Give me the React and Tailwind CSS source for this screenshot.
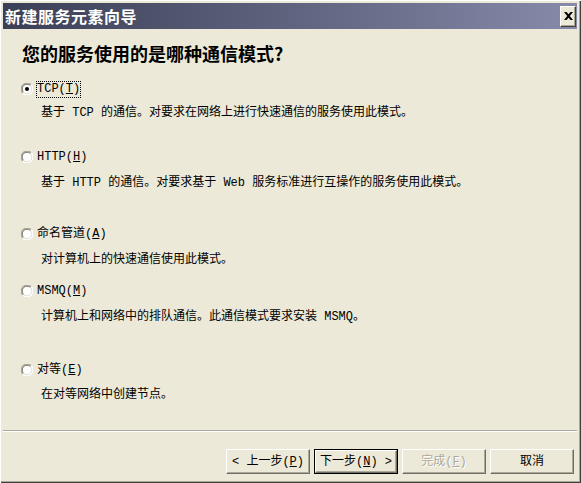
import React, { useState } from 'react';

const FONT = "font-['Liberation_Mono','Noto_Sans_CJK_SC',monospace]";

const options = [
    { id: 'tcp', name: 'TCP', key: 'T', desc: '基于 TCP 的通信。对要求在网络上进行快速通信的服务使用此模式。', rowMt: 'mt-[15px]', descMt: 'mt-[7px]' },
    { id: 'http', name: 'HTTP', key: 'H', desc: '基于 HTTP 的通信。对要求基于 Web 服务标准进行互操作的服务使用此模式。', rowMt: 'mt-[27px]', descMt: 'mt-[9px]' },
    { id: 'pipe', name: '命名管道', key: 'A', desc: '对计算机上的快速通信使用此模式。', rowMt: 'mt-[34px]', descMt: 'mt-[9px]' },
    { id: 'msmq', name: 'MSMQ', key: 'M', desc: '计算机上和网络中的排队通信。此通信模式要求安装 MSMQ。', rowMt: 'mt-[14px]', descMt: 'mt-[9px]' },
    { id: 'p2p', name: '对等', key: 'E', desc: '在对等网络中创建节点。', rowMt: 'mt-[36px]', descMt: 'mt-[8px]' },
];

// classic sunken radio button
const Radio = ({ checked }) => (
    <svg width="12" height="12" viewBox="0 0 12 12" className="shrink-0">
        <circle cx="6" cy="6" r="6" fill="#ffffff" />
        <path d="M1.76 10.24 A6 6 0 0 1 10.24 1.76" fill="none" stroke="#aca899" strokeWidth="1.2" />
        <path d="M2.6 9.4 A4.8 4.8 0 0 1 9.4 2.6" fill="none" stroke="#716f64" strokeWidth="1" />
        <path d="M10.24 1.76 A6 6 0 0 1 1.76 10.24" fill="none" stroke="#ffffff" strokeWidth="1.2" />
        <path d="M9.4 2.6 A4.8 4.8 0 0 1 2.6 9.4" fill="none" stroke="#e2ded0" strokeWidth="1" />
        {checked && <circle cx="6" cy="6" r="2" fill="#000000" />}
    </svg>
);

const Button = ({ children, isDefault, disabled }) => (
    <div className={`w-[84px] h-[25px] ${isDefault ? 'border border-black' : ''}`}>
        <div className="w-full h-full flex items-center justify-center border border-t-white border-l-white border-r-[#716f64] border-b-[#716f64] shadow-[inset_-1px_-1px_0_#aca899] bg-[#ece9d8]">
            <span className={disabled ? 'text-[#aca899] [text-shadow:1px_1px_0_#ffffff]' : 'text-black'}>{children}</span>
        </div>
    </div>
);

export default function App() {
    const [selected, setSelected] = useState('tcp');

    return (
        <div className={`w-[581px] h-[483px] bg-[#ece9d8] flex flex-col pt-[3px] pl-[3px] pr-[4px] pb-[3px] shadow-[inset_1px_1px_0_#ffffff,inset_-1px_-1px_0_#404040,inset_-2px_-2px_0_#aca899] text-[12px] leading-[16px] ${FONT}`}>
            {/* caption */}
            <div className="h-[26px] shrink-0 flex items-center justify-between bg-gradient-to-r from-[#3b3f56] to-[#878aa9] pl-[2px] pr-[1px]">
                <span className="text-white font-bold text-[16px] leading-[20px] tracking-[0.5px] font-['Noto_Sans_CJK_SC',sans-serif]">新建服务元素向导</span>
                <div className="w-[16px] h-[21px] flex items-center justify-center bg-[#ece9d8] border border-t-white border-l-white border-r-[#404040] border-b-[#404040] shadow-[inset_-1px_-1px_0_#aca899]">
                    <svg width="9" height="8" viewBox="0 0 9 8">
                        <path d="M0 0h2.5l2 2.2 2-2.2H9L5.8 4 9 8H6.5l-2-2.2-2 2.2H0l3.2-4z" fill="#000000" />
                    </svg>
                </div>
            </div>

            {/* body */}
            <div className="flex-1 flex flex-col pl-[18px] pt-[12px]">
                <div className="pl-[1px] text-[18px] leading-[24px] font-bold text-black font-['Noto_Sans_CJK_SC',sans-serif]">您的服务使用的是哪种通信模式?</div>

                {options.map((o) => (
                    <div key={o.id} className="flex flex-col">
                        <div className={`${o.rowMt} h-[18px] flex items-center cursor-default`} onClick={() => setSelected(o.id)}>
                            <Radio checked={selected === o.id} />
                            <div className={`ml-[3px] h-[17px] px-[1px] flex items-center ${selected === o.id ? 'outline outline-1 outline-dotted outline-black -outline-offset-1' : ''}`}>
                                <span>{o.name}(<span className="underline">{o.key}</span>)</span>
                            </div>
                        </div>
                        <div className={`${o.descMt} pl-[20px] text-black`}>{o.desc}</div>
                    </div>
                ))}
            </div>

            {/* separator */}
            <div className="h-[2px] border-t border-t-[#aca899] border-b border-b-white" />

            {/* buttons */}
            <div className="h-[48px] shrink-0 flex items-start justify-end gap-[4px] pt-[17px] pr-[3px]">
                <Button>&lt; 上一步(<span className="underline">P</span>)</Button>
                <Button isDefault>下一步(<span className="underline">N</span>) &gt;</Button>
                <Button disabled>完成(<span className="underline">F</span>)</Button>
                <Button>取消</Button>
            </div>
        </div>
    );
}
